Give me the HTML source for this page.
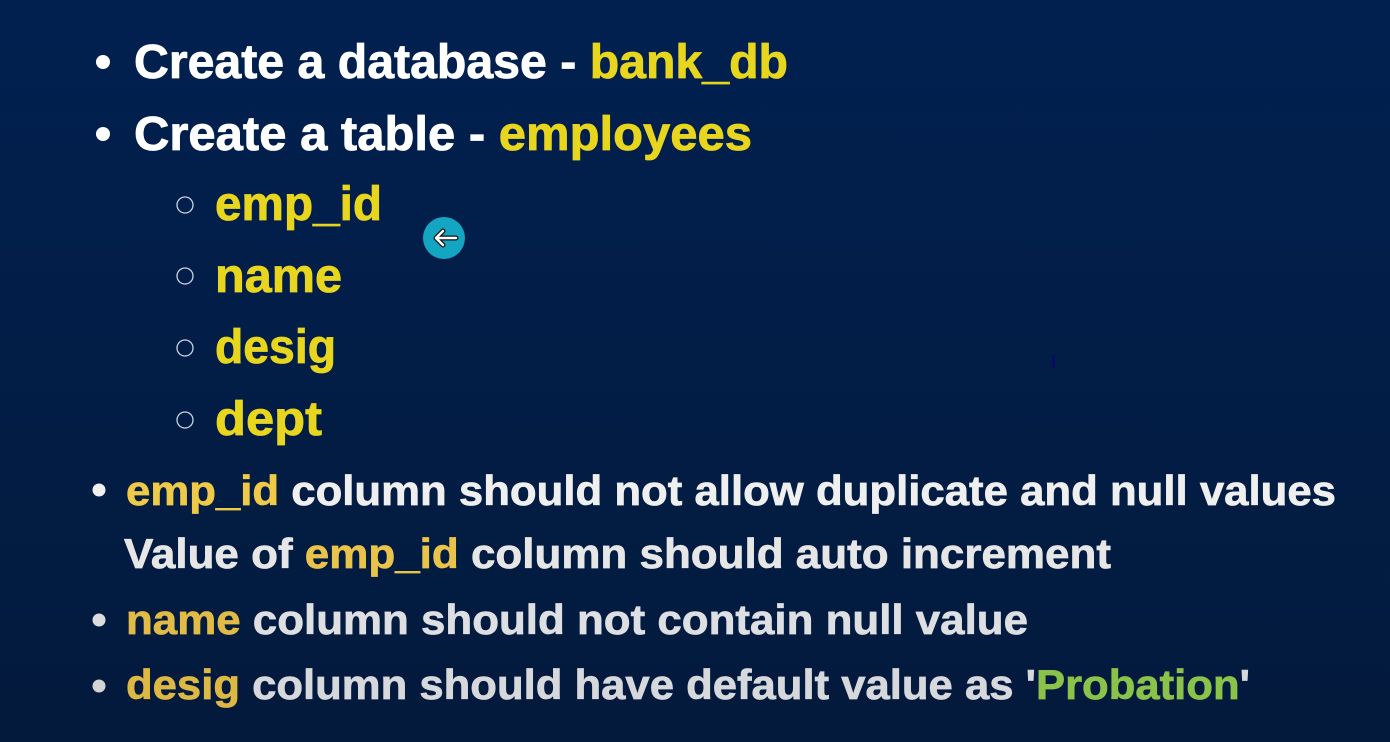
<!DOCTYPE html>
<html><head><meta charset="utf-8"><style>
html,body{margin:0;padding:0;background:#011e48;width:1390px;height:742px;overflow:hidden}
svg{display:block}
text{font-family:"Liberation Sans",sans-serif;font-weight:bold}
</style></head><body>
<svg width="1390" height="742" viewBox="0 0 1390 742" xmlns="http://www.w3.org/2000/svg">
<defs><linearGradient id="bg" x1="0" y1="0" x2="0" y2="1"><stop offset="0" stop-color="#012050"/><stop offset="1" stop-color="#031a3c"/></linearGradient></defs>
<rect width="1390" height="742" fill="url(#bg)"/>
<circle cx="103" cy="62" r="7" fill="#fff"/>
<text x="134" y="78" font-size="48" fill="#fff" stroke="#fff" stroke-width="0.8" textLength="654" lengthAdjust="spacingAndGlyphs">Create a database - <tspan fill="#e8d51e" stroke="#e8d51e">bank_db</tspan></text>
<circle cx="103" cy="134" r="7" fill="#fff"/>
<text x="134" y="150" font-size="48" fill="#fff" stroke="#fff" stroke-width="0.8" textLength="618" lengthAdjust="spacingAndGlyphs">Create a table - <tspan fill="#e8d51e" stroke="#e8d51e">employees</tspan></text>
<g fill="none" stroke="#c8d4e6" stroke-width="1.3">
<circle cx="185" cy="205" r="8"/><circle cx="185" cy="276" r="8"/><circle cx="185" cy="348" r="8"/><circle cx="185" cy="420" r="8"/></g>
<g fill="#e8d51e" stroke="#e8d51e" stroke-width="0.8" font-size="48">
<text x="215" y="220" textLength="167" lengthAdjust="spacingAndGlyphs">emp_id</text>
<text x="215" y="292" textLength="127" lengthAdjust="spacingAndGlyphs">name</text>
<text x="215" y="363" textLength="121" lengthAdjust="spacingAndGlyphs">desig</text>
<text x="215" y="435" textLength="107" lengthAdjust="spacingAndGlyphs">dept</text>
</g>
<circle cx="444" cy="238" r="21" fill="#14a5c2"/>
<path d="M456 238 H436 M443 231 L436 238 L443 245" stroke="#111" stroke-width="5" fill="none" stroke-linecap="round" stroke-linejoin="round"/>
<path d="M456 238 H436 M443 231 L436 238 L443 245" stroke="#fff" stroke-width="2.5" fill="none" stroke-linecap="round" stroke-linejoin="round"/>
<rect x="1052" y="355" width="3" height="13" fill="#0a0a60"/>
<circle cx="99" cy="490" r="6.5" fill="#f0f0f0"/>
<text x="126" y="505" font-size="42" fill="#efefef" stroke="#efefef" stroke-width="0.7" textLength="1210" lengthAdjust="spacingAndGlyphs"><tspan fill="#efc948" stroke="#efc948">emp_id</tspan> column should not allow duplicate and null values</text>
<text x="124" y="568" font-size="42" fill="#e6e6e6" stroke="#e6e6e6" stroke-width="0.7" textLength="987" lengthAdjust="spacingAndGlyphs">Value of <tspan fill="#e9c34a" stroke="#e9c34a">emp_id</tspan> column should auto increment</text>
<circle cx="99" cy="620" r="6.5" fill="#dcdcdc"/>
<text x="126" y="634" font-size="42" fill="#dddfe2" stroke="#dddfe2" stroke-width="0.7" textLength="902" lengthAdjust="spacingAndGlyphs"><tspan fill="#e2bb46" stroke="#e2bb46">name</tspan> column should not contain null value</text>
<circle cx="99" cy="686" r="6.5" fill="#d4d4d4"/>
<text x="126" y="699" font-size="42" fill="#d6d8dc" stroke="#d6d8dc" stroke-width="0.7" textLength="1124" lengthAdjust="spacingAndGlyphs"><tspan fill="#ddb944" stroke="#ddb944">desig</tspan> column should have default value as '<tspan fill="#8bc34a" stroke="#8bc34a">Probation</tspan>'</text>
</svg>
</body></html>
